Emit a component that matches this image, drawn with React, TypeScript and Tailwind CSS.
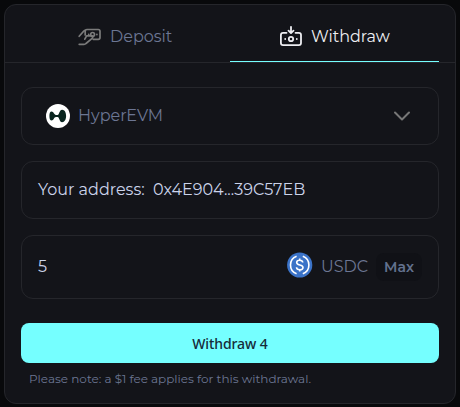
import React, { useState } from 'react';

type Tab = 'deposit' | 'withdraw';

const DepositIcon = () => (
  <svg width="24" height="20" viewBox="0 0 24 20" fill="none" stroke="currentColor" strokeWidth="1.7" strokeLinecap="round" strokeLinejoin="round">
    <path d="M7.2 8V4.2Q7.2 2.5 9 2.5h11.2Q22 2.5 22 4.3v6.2q0 1.8-1.8 1.8h-5" />
    <circle cx="14.6" cy="7.4" r="1.9" />
    <path d="M10.7 7.3v.3M18.9 7.3v.3" />
    <path d="M1.2 9.3 5.6 4.2 7.2 3.3M6.8 12.2 8.6 8.8l5.6.1q1.2 1.4-.4 2.7L8 16.5q-.8.8-2 .8H1.2" />
  </svg>
);

const WithdrawIcon = () => (
  <svg width="24" height="24" viewBox="0 0 24 24" fill="none" stroke="currentColor" strokeWidth="1.8" strokeLinecap="round" strokeLinejoin="round">
    <path d="M7.5 7.8H4.1q-2.2 0-2.2 2.2v8q0 2.1 2.2 2.1h15.7q2.2 0 2.2-2.1v-8q0-2.2-2.2-2.2h-3.3" />
    <path d="M12 1.8v5.5M9.5 5.7 12 8.1l2.5-2.4" />
    <circle cx="12" cy="14" r="2.2" />
    <path d="M6.2 13.9v.2M17.8 13.9v.2" />
  </svg>
);

const HyperLogo = () => (
  <svg width="24" height="24" viewBox="0 0 24 24">
    <circle cx="12" cy="12" r="12" fill="#fff" />
    <path
      d="M3.4 12C3.4 9 4.2 7.6 5.6 7.6c2.2 0 2.3 3.4 4.4 3.4h1.6c1.8 0 1.7-5.2 4.5-5.2 2.6 0 4 2.9 4 6.2s-1.4 6.2-4 6.2c-2.8 0-2.7-5.2-4.5-5.2H10c-2.1 0-2.2 3.5-4.4 3.5-1.4 0-2.2-1.5-2.2-4.5Z"
      fill="#09251f"
    />
  </svg>
);

const UsdcLogo = () => (
  <svg width="26" height="26" viewBox="0 0 26 26" fill="none">
    <circle cx="12.7" cy="13" r="12.6" fill="#3b73c8" />
    <g stroke="#fff" strokeWidth="1.6">
      <path d="M9.6 4.2a9.4 9.4 0 0 0 0 17.6M15.8 4.2a9.4 9.4 0 0 1 0 17.6" />
      <path d="M15.8 10.5c-.2-1.5-1.3-2.2-3.1-2.2s-3 .8-3 2.2c0 3.4 6.3 1.4 6.3 4.9 0 1.4-1.2 2.3-3.2 2.3-2.1 0-3.2-.9-3.3-2.5M12.7 6.4v2M12.7 17.5v2.1" />
    </g>
  </svg>
);

function App() {
  const [tab, setTab] = useState<Tab>('withdraw');
  const [amount, setAmount] = useState('5');

  return (
    <div className="h-[407px] w-[460px] bg-[#08090b] p-1 font-['Montserrat','Lato',sans-serif]">
      <main className="h-[400px] w-[452px] rounded-xl border border-[#25262b] bg-[#131419]">
        <nav className="flex h-[58px] border-b border-[#25262b] px-4 text-base">
          <button
            onClick={() => setTab('deposit')}
            className="flex h-[57px] w-[209px] items-center pl-[57px] pb-px text-[#6c7693]"
          >
            <span className="mt-2 text-[#7b7b7b]"><DepositIcon /></span>
            <span className="ml-2 mt-2">Deposit</span>
          </button>
          <button
            onClick={() => setTab('withdraw')}
            className={`flex h-[57px] w-[209px] items-center border-b pl-[49px] text-[#eeeef2] ${
              tab === 'withdraw' ? 'border-[#75ffff]' : 'border-transparent'
            }`}
          >
            <span className="mt-2"><WithdrawIcon /></span>
            <span className="ml-2 mt-2">Withdraw</span>
          </button>
        </nav>

        <section className="px-4 pt-6">
          <button className="flex h-[58px] w-full items-center rounded-xl border border-[#25262b] pl-6 pr-7 text-[#6c7693]">
            <HyperLogo />
            <span className="ml-2 text-base">HyperEVM</span>
            <svg className="ml-auto" width="16" height="16" viewBox="0 0 16 16" fill="none" stroke="#777" strokeWidth="2" strokeLinecap="round" strokeLinejoin="round">
              <path d="m1 4.5 7 7 7-7" />
            </svg>
          </button>

          <div className="mt-4 flex h-[58px] items-center rounded-xl border border-[#25262b] px-4 text-base text-[#cbd3ea]">
            <span className="w-[115px] whitespace-nowrap">Your address:</span>
            <span>0x4E904...39C57EB</span>
          </div>

          <div className="mt-4 flex h-16 items-center rounded-xl border border-[#25262b] px-4 text-base">
            <input
              value={amount}
              onChange={e => setAmount(e.target.value)}
              className="w-[249px] bg-transparent text-[#cbd3ea] outline-none"
            />
            <div className="-mt-1"><UsdcLogo /></div>
            <span className="ml-2 w-[55px] text-[#6c7693]">USDC</span>
            <button
              onClick={() => setAmount('5')}
              className="h-7 w-[46px] rounded-lg bg-[#101116] text-sm font-semibold text-[#63718e]"
            >
              Max
            </button>
          </div>

          <button className="mt-6 h-10 w-full rounded-lg bg-[#75ffff] pt-0.5 font-['Noto_Sans',sans-serif] text-sm font-medium tracking-[-0.1px] text-[#152c39]">
            Withdraw {Number(amount) - 1}
          </button>
          <p className="ml-2 mt-1.5 text-xs leading-5 text-[#6c7693]">
            Please note: a $1 fee applies for this withdrawal.
          </p>
        </section>
      </main>
    </div>
  );
}

export default App;
